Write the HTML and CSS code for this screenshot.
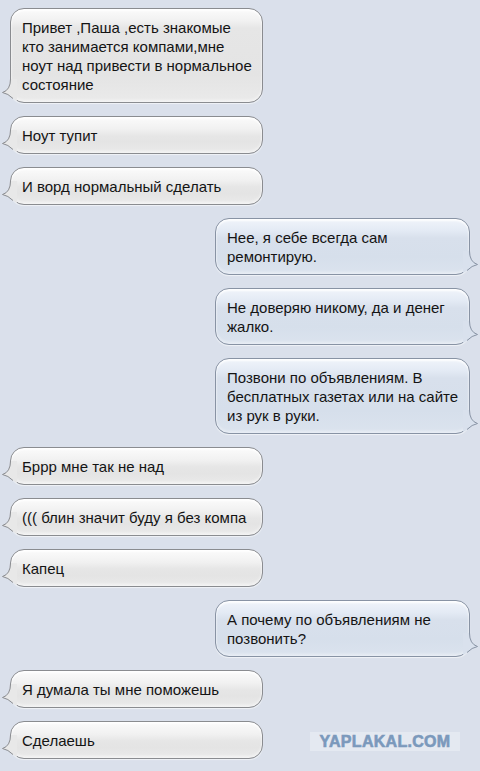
FILE: index.html
```html
<!DOCTYPE html>
<html>
<head>
<meta charset="utf-8">
<link rel="stylesheet" href="styles.css">
</head>
<body>
<div class="chat">
  <div class="msg in">Привет ,Паша ,есть знакомые кто занимается компами,мне ноут над привести в нормальное состояние<svg class="tail" width="16" height="24" viewBox="0 0 16 24"><path class="f" d="M9.5,0 Q9.5,11 1.5,13.5 Q7,14.5 12,19.5 L16,22 L16,0 Z"/><path class="s" d="M9.5,0 Q9.5,11 1.5,13.5 Q7,14.5 12,19.5"/></svg></div>
  <div class="msg in">Ноут тупит<svg class="tail" width="16" height="24" viewBox="0 0 16 24"><path class="f" d="M9.5,0 Q9.5,11 1.5,13.5 Q7,14.5 12,19.5 L16,22 L16,0 Z"/><path class="s" d="M9.5,0 Q9.5,11 1.5,13.5 Q7,14.5 12,19.5"/></svg></div>
  <div class="msg in">И ворд нормальный сделать<svg class="tail" width="16" height="24" viewBox="0 0 16 24"><path class="f" d="M9.5,0 Q9.5,11 1.5,13.5 Q7,14.5 12,19.5 L16,22 L16,0 Z"/><path class="s" d="M9.5,0 Q9.5,11 1.5,13.5 Q7,14.5 12,19.5"/></svg></div>
  <div class="msg out">Нее, я себе всегда сам ремонтирую.<svg class="tail" width="16" height="24" viewBox="0 0 16 24"><path class="f" d="M6.5,0 Q6.5,11 14.5,13.5 Q9,14.5 4,19.5 L0,22 L0,0 Z"/><path class="s" d="M6.5,0 Q6.5,11 14.5,13.5 Q9,14.5 4,19.5"/></svg></div>
  <div class="msg out">Не доверяю никому, да и денег жалко.<svg class="tail" width="16" height="24" viewBox="0 0 16 24"><path class="f" d="M6.5,0 Q6.5,11 14.5,13.5 Q9,14.5 4,19.5 L0,22 L0,0 Z"/><path class="s" d="M6.5,0 Q6.5,11 14.5,13.5 Q9,14.5 4,19.5"/></svg></div>
  <div class="msg out">Позвони по объявлениям. В бесплатных газетах или на сайте из рук в руки.<svg class="tail" width="16" height="24" viewBox="0 0 16 24"><path class="f" d="M6.5,0 Q6.5,11 14.5,13.5 Q9,14.5 4,19.5 L0,22 L0,0 Z"/><path class="s" d="M6.5,0 Q6.5,11 14.5,13.5 Q9,14.5 4,19.5"/></svg></div>
  <div class="msg in">Бррр мне так не над<svg class="tail" width="16" height="24" viewBox="0 0 16 24"><path class="f" d="M9.5,0 Q9.5,11 1.5,13.5 Q7,14.5 12,19.5 L16,22 L16,0 Z"/><path class="s" d="M9.5,0 Q9.5,11 1.5,13.5 Q7,14.5 12,19.5"/></svg></div>
  <div class="msg in">((( блин значит буду я без компа<svg class="tail" width="16" height="24" viewBox="0 0 16 24"><path class="f" d="M9.5,0 Q9.5,11 1.5,13.5 Q7,14.5 12,19.5 L16,22 L16,0 Z"/><path class="s" d="M9.5,0 Q9.5,11 1.5,13.5 Q7,14.5 12,19.5"/></svg></div>
  <div class="msg in">Капец<svg class="tail" width="16" height="24" viewBox="0 0 16 24"><path class="f" d="M9.5,0 Q9.5,11 1.5,13.5 Q7,14.5 12,19.5 L16,22 L16,0 Z"/><path class="s" d="M9.5,0 Q9.5,11 1.5,13.5 Q7,14.5 12,19.5"/></svg></div>
  <div class="msg out">А почему по объявлениям не позвонить?<svg class="tail" width="16" height="24" viewBox="0 0 16 24"><path class="f" d="M6.5,0 Q6.5,11 14.5,13.5 Q9,14.5 4,19.5 L0,22 L0,0 Z"/><path class="s" d="M6.5,0 Q6.5,11 14.5,13.5 Q9,14.5 4,19.5"/></svg></div>
  <div class="msg in">Я думала ты мне поможешь<svg class="tail" width="16" height="24" viewBox="0 0 16 24"><path class="f" d="M9.5,0 Q9.5,11 1.5,13.5 Q7,14.5 12,19.5 L16,22 L16,0 Z"/><path class="s" d="M9.5,0 Q9.5,11 1.5,13.5 Q7,14.5 12,19.5"/></svg></div>
  <div class="msg in">Сделаешь<svg class="tail" width="16" height="24" viewBox="0 0 16 24"><path class="f" d="M9.5,0 Q9.5,11 1.5,13.5 Q7,14.5 12,19.5 L16,22 L16,0 Z"/><path class="s" d="M9.5,0 Q9.5,11 1.5,13.5 Q7,14.5 12,19.5"/></svg></div>
</div>
<div class="watermark">YAPLAKAL.COM</div>
</body>
</html>
```
FILE: styles.css
```css
html, body {
  margin: 0;
  padding: 0;
}
body {
  width: 480px;
  height: 771px;
  overflow: hidden;
  background: #dae0eb;
  font-family: "Liberation Sans", Arial, sans-serif;
  position: relative;
}
.chat {
  display: flex;
  flex-direction: column;
  gap: 13px;
  padding-top: 8px;
}
.msg {
  position: relative;
  box-sizing: border-box;
  border: 1px solid #8a8c90;
  border-radius: 14px;
  padding: 9px 10px 8px 11px;
  font-size: 15px;
  line-height: 19px;
  color: #141414;
}
.msg.in {
  margin-left: 10px;
  width: 253px;
  background: linear-gradient(to bottom, #fbfbfb 0px, #f1f1f1 12px, #e6e6e6 19px, #e4e4e4 70%, #eaeaea 100%);
  box-shadow: inset 0 2px 2px rgba(255,255,255,0.9), inset 0 -2px 3px rgba(255,255,255,0.5), 0 1px 1px rgba(255,255,255,0.6);
}
.msg.out {
  margin-left: 215px;
  width: 255px;
  border-color: #8893a4;
  background: linear-gradient(to bottom, #f0f4fa 0px, #e3eaf4 12px, #d8e0ec 19px, #d6dfeb 70%, #dbe3ee 100%);
  box-shadow: inset 0 2px 2px rgba(255,255,255,0.9), inset 0 -2px 3px rgba(255,255,255,0.4), 0 1px 1px rgba(255,255,255,0.6);
}
.tail {
  position: absolute;
  bottom: -1px;
  display: block;
}
.msg.in .tail {
  left: -10px;
}
.msg.out .tail {
  right: -10px;
}
.tail .s {
  fill: none;
  stroke: #8a8c90;
  stroke-width: 1;
}
.msg.out .tail .s {
  stroke: #8893a4;
}
.msg.in .tail .f {
  fill: #e8e8e8;
}
.msg.out .tail .f {
  fill: #d9e1ed;
}
.watermark {
  position: absolute;
  left: 310px;
  top: 732px;
  width: 150px;
  height: 19px;
  background: #e4e9f1;
  color: #7b99bc;
  font-family: "Liberation Sans", Arial, sans-serif;
  font-weight: bold;
  font-size: 16px;
  line-height: 19px;
  text-align: center;
  letter-spacing: 0.3px;
  -webkit-text-stroke: 0.6px #7b99bc;
}
```
